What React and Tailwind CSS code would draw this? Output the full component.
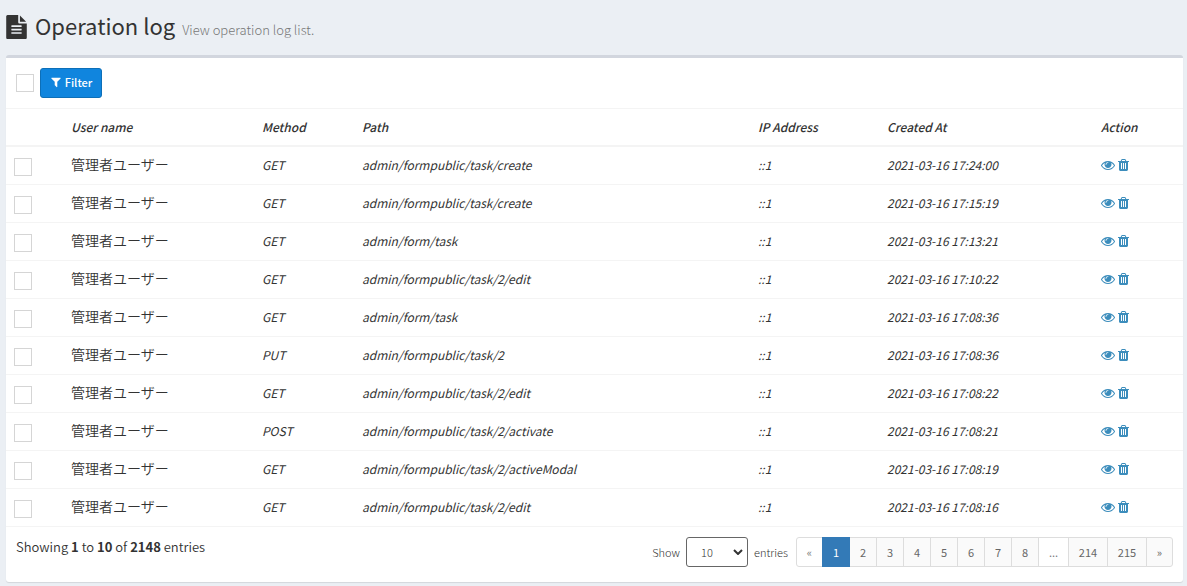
import React from "react";

const PATHS = {
  file: "M1596 476q14 14 28 36h-472v-472q22 14 36 28zm-476 164h544v1056q0 40-28 68t-68 28h-1344q-40 0-68-28t-28-68v-1600q0-40 28-68t68-28h800v544q0 40 28 68t68 28zm160 736v-64q0-14-9-23t-23-9h-704q-14 0-23 9t-9 23v64q0 14 9 23t23 9h704q14 0 23-9t9-23zm0-256v-64q0-14-9-23t-23-9h-704q-14 0-23 9t-9 23v64q0 14 9 23t23 9h704q14 0 23-9t9-23zm0-256v-64q0-14-9-23t-23-9h-704q-14 0-23 9t-9 23v64q0 14 9 23t23 9h704q14 0 23-9t9-23z",
  filter:
    "M1595 295q17 41-14 70l-493 493v742q0 42-39 59-13 5-25 5-27 0-45-19l-256-256q-19-19-19-45v-486l-493-493q-31-29-14-70 17-39 59-39h1280q42 0 59 39z",
  eye: "M1664 960q-152-236-381-353 61 104 61 225 0 185-131.5 316.5t-316.5 131.5-316.5-131.5-131.5-316.5q0-121 61-225-229 117-381 353 133 205 333.5 326.5t434.5 121.5 434.5-121.5 333.5-326.5zm-720-384q0-20-14-34t-34-14q-125 0-214.5 89.5t-89.5 214.5q0 20 14 34t34 14 34-14 14-34q0-86 61-147t147-61q20 0 34-14t14-34zm848 384q0 34-20 69-140 230-376.5 368.5t-499.5 138.5-499.5-139-376.5-368q-20-35-20-69t20-69q140-229 376.5-368t499.5-139 499.5 139 376.5 368q20 35 20 69z",
  trash:
    "M704 1376v-704q0-14-9-23t-23-9h-64q-14 0-23 9t-9 23v704q0 14 9 23t23 9h64q14 0 23-9t9-23zm256 0v-704q0-14-9-23t-23-9h-64q-14 0-23 9t-9 23v704q0 14 9 23t23 9h64q14 0 23-9t9-23zm256 0v-704q0-14-9-23t-23-9h-64q-14 0-23 9t-9 23v704q0 14 9 23t23 9h64q14 0 23-9t9-23zm-544-992h448l-48-117q-7-9-17-11h-317q-10 2-17 11zm928 32v64q0 14-9 23t-23 9h-96v948q0 83-47 143.5t-113 60.5h-832q-66 0-113-58.5t-47-141.5v-952h-96q-14 0-23-9t-9-23v-64q0-14 9-23t23-9h309l70-167q15-37 54-63t79-26h320q40 0 79 26t54 63l70 167h309q14 0 23 9t9 23z",
};

function Icon({ name, viewBox = "0 0 1792 1792", className }) {
  return (
    <svg viewBox={viewBox} className={className} fill="currentColor" aria-hidden="true">
      <path d={PATHS[name]} />
    </svg>
  );
}

function Tick({ label }) {
  return (
    <input
      type="checkbox"
      aria-label={label}
      className="block size-[18px] shrink-0 appearance-none border border-[#d5d5d5] bg-white checked:bg-[#337ab7]"
    />
  );
}

const LOGS = [
  ["GET", "admin/formpublic/task/create", "17:24:00"],
  ["GET", "admin/formpublic/task/create", "17:15:19"],
  ["GET", "admin/form/task", "17:13:21"],
  ["GET", "admin/formpublic/task/2/edit", "17:10:22"],
  ["GET", "admin/form/task", "17:08:36"],
  ["PUT", "admin/formpublic/task/2", "17:08:36"],
  ["GET", "admin/formpublic/task/2/edit", "17:08:22"],
  ["POST", "admin/formpublic/task/2/activate", "17:08:21"],
  ["GET", "admin/formpublic/task/2/activeModal", "17:08:19"],
  ["GET", "admin/formpublic/task/2/edit", "17:08:16"],
];

const HEADINGS = ["User name", "Method", "Path", "IP Address", "Created At", "Action"];
const PAGES = ["«", "1", "2", "3", "4", "5", "6", "7", "8", "...", "214", "215", "»"];

function pageStyle(page) {
  if (page === "1") return "z-10 border-[#337ab7] bg-[#337ab7] text-white";
  if (page === "«" || page === "...") return "border-[#ddd] bg-white text-[#777]";
  return "border-[#ddd] bg-[#fafafa] text-[#666]";
}

function pageWidth(page) {
  if (page === "«" || page === "»") return "w-[27px]";
  if (page === "...") return "w-[31px]";
  return page.length > 1 ? "w-10" : "w-7";
}

function Pager() {
  return (
    <nav aria-label="Pages">
      <ul className="flex pl-px text-[11px] leading-[18px]">
        {PAGES.map((page) => {
          const box = `relative flex h-[30px] items-center justify-center border pb-px ${pageWidth(page)} ${pageStyle(page)} ${
            page === "«" ? "rounded-l-[3px]" : ""
          } ${page === "»" ? "rounded-r-[3px]" : ""}`;
          return (
            <li key={page} className="-ml-px">
              {page === "«" || page === "..." ? (
                <span className={box}>{page}</span>
              ) : (
                <a href={`#page-${page}`} className={box}>
                  {page}
                </a>
              )}
            </li>
          );
        })}
      </ul>
    </nav>
  );
}

export default function App() {
  return (
    <div className="min-h-screen bg-[#ebeff4] pr-1 pl-[6px] font-['Noto_Sans_CJK_JP',sans-serif] text-[13px] leading-5 text-[#333]">
      <header className="flex h-[55px] items-center pb-px">
        <Icon name="file" viewBox="128 0 1536 1792" className="h-6 w-[21px]" />
        <h1 className="ml-2 flex items-baseline gap-[7px] text-[22px] leading-[26px]">
          Operation log
          <small className="text-[13px] font-light text-[#777]">View operation log list.</small>
        </h1>
      </header>

      <main className="rounded-[3px] border-t-[3px] border-[#d2d6de] bg-white shadow-[0_1px_1px_rgba(0,0,0,0.1)]">
        <div className="flex h-[50px] items-center gap-[6px] px-[10px]">
          <Tick label="Select all" />
          <button
            type="button"
            className="flex h-[30px] w-[62px] items-center justify-center gap-[3px] rounded-[3px] border border-[#0d6fb8] bg-[#1085de] pb-[2px] text-[11px] leading-[18px] font-medium text-white"
          >
            <Icon name="filter" className="size-3" />
            Filter
          </button>
        </div>

        <table className="w-full table-fixed border-separate border-spacing-0">
          <colgroup>
            <col className="w-[57px]" />
            <col className="w-[191px]" />
            <col className="w-[100px]" />
            <col />
            <col className="w-[129px]" />
            <col className="w-[214px]" />
            <col className="w-[90px]" />
          </colgroup>
          <thead>
            <tr className="h-[39px]">
              <td className="border-t border-b-2 border-[#f4f4f4]" />
              {HEADINGS.map((heading) => (
                <th
                  key={heading}
                  scope="col"
                  className="border-t border-b-2 border-[#f4f4f4] px-2 text-left text-[12px] font-medium italic"
                >
                  {heading}
                </th>
              ))}
            </tr>
          </thead>
          <tbody>
            {LOGS.map(([method, path, time]) => (
              <tr
                key={path + time}
                className="h-[38px] text-[12px] italic *:border-b *:border-[#f4f4f4] *:px-2"
              >
                <td className="pt-[3px]">
                  <Tick label={`Select entry ${time}`} />
                </td>
                <td className="pb-[3px] text-[14px] font-[350] not-italic">管理者ユーザー</td>
                <td className="pb-px">{method}</td>
                <td className="pb-px">{path}</td>
                <td className="pb-px">::1</td>
                <td className="pb-px">2021-03-16 {time}</td>
                <td className="pb-px">
                  <div className="flex gap-[3px] text-[#3c8dbc]">
                    <a href="#view" aria-label="View">
                      <Icon name="eye" className="size-[14px]" />
                    </a>
                    <a href="#delete" aria-label="Delete">
                      <Icon name="trash" viewBox="192 0 1408 1792" className="h-[14px] w-[11px]" />
                    </a>
                  </div>
                </td>
              </tr>
            ))}
          </tbody>
        </table>

        <footer className="flex items-start justify-between p-[10px] pb-[15px]">
          <p className="font-[350]">
            Showing <b>1</b> to <b>10</b> of <b>2148</b> entries
          </p>
          <div className="flex items-center gap-2">
            <div className="flex items-center gap-[6px] text-[11px] font-light">
              <label htmlFor="per-page">Show</label>
              <div className="relative flex items-center">
                <select
                  id="per-page"
                  defaultValue="10"
                  className="h-[30px] w-[62px] appearance-none rounded-[3px] border border-[#666] bg-white px-[14px]"
                >
                  <option>10</option>
                  <option>20</option>
                  <option>50</option>
                </select>
                <svg
                  viewBox="0 0 10 6"
                  className="pointer-events-none absolute right-[5px] h-[6px] w-[10px]"
                  fill="none"
                  stroke="currentColor"
                  strokeWidth="2"
                  aria-hidden="true"
                >
                  <path d="M1 1l4 4 4-4" />
                </svg>
              </div>
              <span>entries</span>
            </div>
            <Pager />
          </div>
        </footer>
      </main>
    </div>
  );
}
